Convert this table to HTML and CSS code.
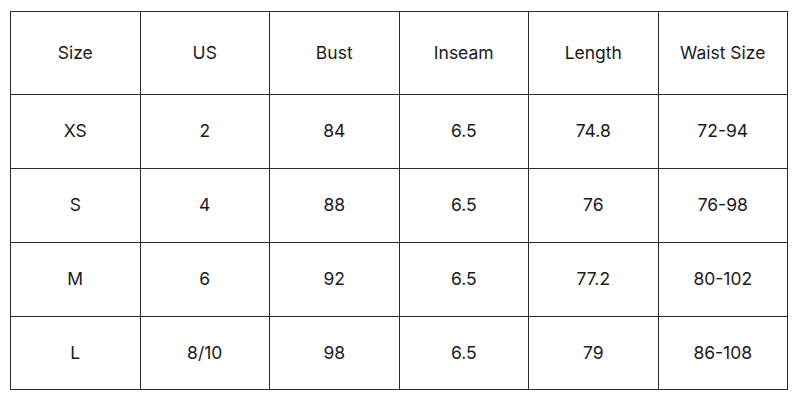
FILE: index.html
```html
<!DOCTYPE html>
<html>
<head>
<meta charset="utf-8">
<link rel="stylesheet" href="styles.css">
</head>
<body>
<table class="size-table">
  <tr class="head"><td>Size</td><td>US</td><td>Bust</td><td>Inseam</td><td>Length</td><td>Waist Size</td></tr>
  <tr><td>XS</td><td>2</td><td>84</td><td>6.5</td><td>74.8</td><td>72-94</td></tr>
  <tr><td>S</td><td>4</td><td>88</td><td>6.5</td><td>76</td><td>76-98</td></tr>
  <tr><td>M</td><td>6</td><td>92</td><td>6.5</td><td>77.2</td><td>80-102</td></tr>
  <tr class="last"><td>L</td><td>8/10</td><td>98</td><td>6.5</td><td>79</td><td>86-108</td></tr>
</table>
</body>
</html>
```
FILE: styles.css
```css
html, body { margin: 0; padding: 0; background: #fff; }
body { padding: 11px 0 0 10px; }
.size-table {
  border-collapse: collapse;
  width: 778px;
  table-layout: fixed;
  font-family: Inter, "Liberation Sans", sans-serif;
  font-size: 17.5px;
  color: #1a1a1a;
}
.size-table td {
  border: 1px solid #2a2a2a;
  text-align: center;
  vertical-align: middle;
  height: 74px;
  padding: 0 0 2px 0;
  box-sizing: border-box;
}
.size-table tr.head td { height: 83px; }
.size-table tr.last td { height: 73px; }
```
